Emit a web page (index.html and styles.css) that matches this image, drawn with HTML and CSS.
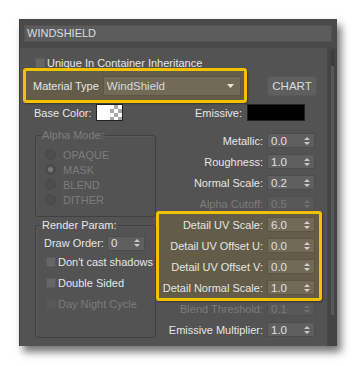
FILE: index.html
```html
<!DOCTYPE html>
<html>
<head>
<meta charset="utf-8">
<link rel="stylesheet" href="styles.css">
</head>
<body>
<div class="win">
  <div class="head">
    <div class="title">WINDSHIELD</div>
  </div>
  <div class="main">
    <div class="panel">
      <div class="row-unique">
        <span class="cb"></span><span class="txt">Unique In Container Inheritance</span>
      </div>
      <div class="row-type">
        <div class="hl hl-type">
          <span class="lbl">Material Type</span>
          <div class="dropdown"><span>WindShield</span>
            <svg class="dd-arrow" width="7" height="4" viewBox="0 0 7 4"><path d="M0 0H7L3.5 4Z" fill="#e6e6e6"/></svg>
          </div>
        </div>
        <div class="btn">CHART</div>
      </div>
      <div class="row-color">
        <span class="lbl base-lbl">Base Color:</span>
        <span class="swatch checker"></span>
        <span class="lbl emi-lbl">Emissive:</span>
        <span class="swatch black"></span>
      </div>
      <div class="cols">
        <div class="left">
          <fieldset class="grp grp-alpha">
            <legend class="dis">Alpha Mode:</legend>
            <div class="radio"><span class="rd"></span><span class="dis">OPAQUE</span></div>
            <div class="radio"><span class="rd on"></span><span class="dis">MASK</span></div>
            <div class="radio"><span class="rd"></span><span class="dis">BLEND</span></div>
            <div class="radio"><span class="rd"></span><span class="dis">DITHER</span></div>
          </fieldset>
          <fieldset class="grp grp-render">
            <legend>Render Param:</legend>
            <div class="draw-row">
              <span>Draw Order:</span>
              <div class="spin small"><span>0</span>
                <svg class="arr" width="6" height="10" viewBox="0 0 6 10"><path d="M0 4H6L3 1Z M0 6H6L3 9Z" fill="#c8c8c8"/></svg>
              </div>
            </div>
            <div class="chk"><span class="cb"></span><span>Don't cast shadows</span></div>
            <div class="chk"><span class="cb"></span><span>Double Sided</span></div>
            <div class="chk dis"><span class="cb"></span><span>Day Night Cycle</span></div>
          </fieldset>
        </div>
        <div class="right">
          <div class="prow"><span class="pl">Metallic:</span><div class="spin"><span>0.0</span><svg class="arr" width="6" height="10" viewBox="0 0 6 10"><path d="M0 4H6L3 1Z M0 6H6L3 9Z" fill="#c8c8c8"/></svg></div></div>
          <div class="prow"><span class="pl">Roughness:</span><div class="spin"><span>1.0</span><svg class="arr" width="6" height="10" viewBox="0 0 6 10"><path d="M0 4H6L3 1Z M0 6H6L3 9Z" fill="#c8c8c8"/></svg></div></div>
          <div class="prow"><span class="pl">Normal Scale:</span><div class="spin"><span>0.2</span><svg class="arr" width="6" height="10" viewBox="0 0 6 10"><path d="M0 4H6L3 1Z M0 6H6L3 9Z" fill="#c8c8c8"/></svg></div></div>
          <div class="prow off"><span class="pl">Alpha Cutoff:</span><div class="spin"><span>0.5</span><svg class="arr" width="6" height="10" viewBox="0 0 6 10"><path d="M0 4H6L3 1Z M0 6H6L3 9Z" fill="#707070"/></svg></div></div>
          <div class="hl hl-detail">
            <div class="prow"><span class="pl">Detail UV Scale:</span><div class="spin"><span>6.0</span><svg class="arr" width="6" height="10" viewBox="0 0 6 10"><path d="M0 4H6L3 1Z M0 6H6L3 9Z" fill="#d0d0d0"/></svg></div></div>
            <div class="prow"><span class="pl">Detail UV Offset U:</span><div class="spin"><span>0.0</span><svg class="arr" width="6" height="10" viewBox="0 0 6 10"><path d="M0 4H6L3 1Z M0 6H6L3 9Z" fill="#d0d0d0"/></svg></div></div>
            <div class="prow"><span class="pl">Detail UV Offset V:</span><div class="spin"><span>0.0</span><svg class="arr" width="6" height="10" viewBox="0 0 6 10"><path d="M0 4H6L3 1Z M0 6H6L3 9Z" fill="#d0d0d0"/></svg></div></div>
            <div class="prow"><span class="pl">Detail Normal Scale:</span><div class="spin"><span>1.0</span><svg class="arr" width="6" height="10" viewBox="0 0 6 10"><path d="M0 4H6L3 1Z M0 6H6L3 9Z" fill="#d0d0d0"/></svg></div></div>
          </div>
          <div class="prow off"><span class="pl">Blend Threshold:</span><div class="spin"><span>0.1</span><svg class="arr" width="6" height="10" viewBox="0 0 6 10"><path d="M0 4H6L3 1Z M0 6H6L3 9Z" fill="#707070"/></svg></div></div>
          <div class="prow"><span class="pl">Emissive Multiplier:</span><div class="spin"><span>1.0</span><svg class="arr" width="6" height="10" viewBox="0 0 6 10"><path d="M0 4H6L3 1Z M0 6H6L3 9Z" fill="#c8c8c8"/></svg></div></div>
        </div>
      </div>
    </div>
    <div class="scroll"><div class="thumb"></div></div>
  </div>
</div>
</body>
</html>
```
FILE: styles.css
```css
* { box-sizing: border-box; }
html, body { margin: 0; padding: 0; background: #ffffff; }
body {
  font-family: "Liberation Sans", Arial, sans-serif;
  font-size: 11px;
  color: #e6e6e6;
  width: 357px;
  height: 366px;
  overflow: hidden;
}
.win {
  margin: 19px 0 0 19px;
  width: 318px;
  height: 327px;
  background: #4a4a4a;
  border-left: 1px solid #3e3e3e;
  box-shadow: 4px 6px 8px rgba(0,0,0,0.55);
  display: flex;
  flex-direction: column;
}
.head {
  height: 29px;
  padding: 6px 0 0 4px;
  flex: none;
}
.title {
  width: 308px;
  height: 17px;
  background: #5c5c5c;
  border: 1px solid #535353;
  padding-left: 2px;
  line-height: 15px;
  color: #dcdcdc;
}
.main {
  flex: 1;
  display: flex;
  background: #535353;
}
.panel {
  width: 308px;
  border-right: 1px solid #474747;
  position: relative;
}
.scroll {
  width: 9px;
  background: #444444;
  padding: 2px 0 31px 3px;
}
.thumb {
  width: 3px;
  height: 100%;
  background: #575757;
  border-top: 16px solid #3c3c3c;
}
.cb {
  display: inline-block;
  width: 10px;
  height: 10px;
  background: #666666;
  border: 1px solid #5a5a5a;
  flex: none;
}
.row-unique {
  margin-top: 9px;
  padding-left: 15px;
  height: 11px;
  display: flex;
  align-items: center;
}
.row-unique .txt { margin-left: 2px; }
.row-type {
  margin-top: 0px;
  display: flex;
  align-items: center;
}
.hl {
  border: 3px solid #f2c100;
  border-radius: 3px;
  background: #625c48;
  box-shadow: 1px 1px 2px rgba(0,0,0,0.35);
}
.hl-type {
  margin-left: 3px;
  width: 224px;
  height: 35px;
  display: flex;
  align-items: center;
  padding-left: 7px;
}
.dropdown {
  margin-left: 4px;
  width: 138px;
  height: 20px;
  background: #716b56;
  border: 1px solid #5b5645;
  display: flex;
  align-items: center;
  padding-left: 3px;
  color: #d8d8d8;
  font-size: 11.5px;
}
.dropdown span { flex: 1; }
.dd-arrow { margin-right: 6px; }
.btn {
  margin-left: 20px;
  width: 50px;
  height: 20px;
  border-radius: 3px;
  background: #5f5f5f;
  border: 1px solid #585858;
  display: flex;
  align-items: center;
  justify-content: center;
  color: #dcdcdc;
  font-size: 11.5px;
}
.row-color {
  margin-top: 1px;
  height: 17px;
  display: flex;
  align-items: center;
}
.base-lbl { margin-left: 14px; width: 62px; }
.swatch {
  display: inline-block;
  height: 17px;
  border: 1px solid #222;
}
.checker {
  width: 27px;
  background-color: #ffffff;
  background-image:
    linear-gradient(to right, #ffffff 13px, transparent 13px),
    linear-gradient(45deg, #a8a8a8 25%, transparent 25%, transparent 75%, #a8a8a8 75%),
    linear-gradient(45deg, #a8a8a8 25%, transparent 25%, transparent 75%, #a8a8a8 75%);
  background-size: 100% 100%, 8px 8px, 8px 8px;
  background-position: 0 0, 13px 0, 17px 4px;
}
.emi-lbl { width: 124px; text-align: right; padding-right: 5px; }
.black { width: 58px; background: #000; }
.cols {
  display: flex;
  margin-top: 9px;
}
.left {
  margin-left: 15px;
  width: 121px;
  display: flex;
  flex-direction: column;
}
.grp {
  margin: 0;
  padding: 0;
  border: 1px solid #404040;
  border-radius: 3px;
  box-shadow: inset 1px 1px 0 #5a5a5a;
  min-width: 0;
}
.grp legend {
  margin-left: 5px;
  padding: 0 1px;
  line-height: 13px;
}
.grp-alpha {
  height: 88px;
  margin-top: -1px;
  padding-top: 5px;
}
.dis { color: #7c7c7c; }
.radio {
  height: 15px;
  display: flex;
  align-items: center;
  padding-left: 9px;
}
.rd {
  width: 11px;
  height: 11px;
  border-radius: 50%;
  background: #4d4d4d;
  border: 1px solid #484848;
  margin-right: 7px;
  position: relative;
}
.rd.on::after {
  content: "";
  position: absolute;
  left: 2px; top: 2px;
  width: 5px; height: 5px;
  border-radius: 50%;
  background: #7a7a7a;
}
.grp-render {
  margin-top: 2px;
  height: 119px;
  padding-top: 3px;
}
.draw-row {
  display: flex;
  align-items: center;
  height: 16px;
  padding-left: 8px;
}
.draw-row .spin { margin-left: 3px; }
.chk {
  display: flex;
  align-items: center;
  height: 20px;
  padding-left: 10px;
  margin-top: 1px;
}
.chk:first-of-type { margin-top: 5px; }
.chk .cb { margin-right: 2px; }
.chk.dis .cb { background: #585858; border-color: #555; }
.right {
  margin-left: 0;
  width: 166px;
  display: flex;
  flex-direction: column;
}
.prow {
  height: 21px;
  display: flex;
  align-items: center;
  padding-right: 7px;
}
.pl {
  flex: 1;
  text-align: right;
  margin-right: 4px;
  white-space: nowrap;
}
.spin {
  width: 48px;
  height: 15px;
  background: #5f5f5f;
  border: 1px solid #4c4c4c;
  display: flex;
  align-items: center;
  padding-left: 3px;
  font-size: 11.5px;
  color: #e0e0e0;
}
.spin span { flex: 1; }
.spin .arr { margin-right: 4px; }
.spin.small { width: 38px; }
.off .pl { color: #7c7c7c; }
.off .spin { background: #585858; border-color: #4e4e4e; color: #7a7a7a; }
.hl-detail {
  margin: -3px 0;
  position: relative;
}
.hl-detail .prow { padding-right: 4px; }
.hl-detail .spin { background: #716b56; border-color: #5a5544; }
```
